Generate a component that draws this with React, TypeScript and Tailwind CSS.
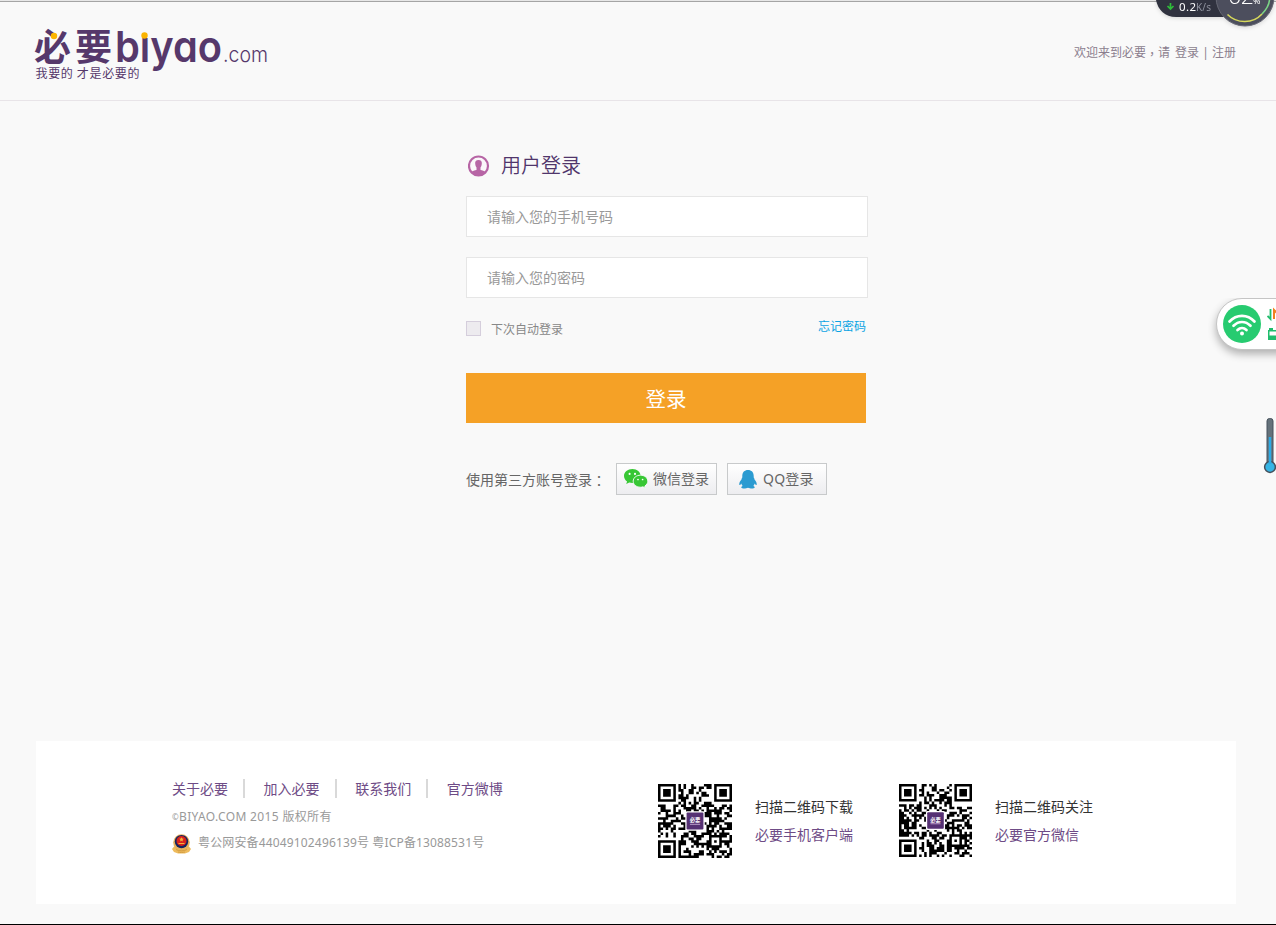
import React from "react";

const links = ["关于必要", "加入必要", "联系我们", "官方微博"];

function Logo() {
  return (
    <svg width="240" height="60" viewBox="0 0 240 60" className="block overflow-visible" fill="#56386b">
      <g className="font-['Noto_Sans_CJK_SC',sans-serif] font-bold">
        <text x="-2" y="36.500" fontSize="37" textLength="37" lengthAdjust="spacingAndGlyphs">必</text>
        <text x="39" y="36.500" fontSize="37" textLength="37" lengthAdjust="spacingAndGlyphs">要</text>
      </g>
      <text x="79" y="38" fontSize="43" textLength="107" lengthAdjust="spacingAndGlyphs" className="font-['Inter',sans-serif] font-semibold [font-feature-settings:'cv11']">bıyao</text>
      <text x="187" y="38" fontSize="22" textLength="45" lengthAdjust="spacingAndGlyphs" className="font-['Inter',sans-serif] font-light">.com</text>
      <text x="-.5" y="53.500" fontSize="12" textLength="104" className="font-['Noto_Sans_CJK_SC',sans-serif]">我要的 才是必要的</text>
      <circle cx="18" cy="12" r="3.2" fill="#fbb400" />
      <circle cx="108.500" cy="11.500" r="3.200" fill="#fbb400" />
    </svg>
  );
}

function QrCode({ seed, size }: { seed: number; size: number }) {
  const n = 29;
  let s = seed;
  const next = () => {
    s = (s * 1103515245 + 12345) % 2147483648;
    return s / 2147483648;
  };
  const finder = (x: number, y: number) => {
    if (x < 0 || y < 0 || x > 6 || y > 6) return false;
    const d = Math.max(Math.abs(x - 3), Math.abs(y - 3));
    return d !== 2;
  };
  let d = "";
  for (let y = 0; y < n; y++) {
    for (let x = 0; x < n; x++) {
      const random = next() > 0.47;
      let on = random;
      if (x < 8 && y < 8) on = finder(x, y);
      else if (x > 20 && y < 8) on = finder(x - 22, y);
      else if (x < 8 && y > 20) on = finder(x, y - 22);
      else if (x > 19 && x < 25 && y > 19 && y < 25) on = Math.max(Math.abs(x - 22), Math.abs(y - 22)) !== 1;
      if (on) d += `M${x} ${y}h1v1h-1z`;
    }
  }
  return (
    <svg width={size} height={size} viewBox="0 0 29 29" className="block shrink-0">
      <path d={d} fill="#000" />
      <rect x="10.7" y="10.7" width="7.6" height="7.6" rx=".6" fill="#fff" />
      <rect x="11.2" y="11.2" width="6.6" height="6.6" rx=".4" fill="#553073" />
      <text x="14.5" y="14.9" fontSize="2.1" textAnchor="middle" fill="#fff" className="font-['Noto_Sans_CJK_SC',sans-serif] font-bold">必要</text>
      <path d="M12.5 15.8h4" stroke="#b99cc8" strokeWidth=".4" />
    </svg>
  );
}

function UserIcon() {
  return (
    <svg width="22" height="22" viewBox="0 0 22 22" className="block shrink-0">
      <circle cx="10.500" cy="11" r="9.500" fill="#fbf7fa" stroke="#b765a5" strokeWidth="2.200" />
      <path d="M10.500 5c2.500 0 3.600 1.500 3.300 3.800-.2 1.800-.6 2.900-1.300 3.600V15c1.800.4 3.800.900 5.200 1.800A9.500 9.500 0 0 1 10.500 20.500a9.500 9.500 0 0 1-7.200-3.700C4.700 15.900 6.700 15.400 8.500 15v-2.600c-.7-.7-1.100-1.800-1.300-3.600C6.900 6.500 8 5 10.500 5Z" fill="#b765a5" />
    </svg>
  );
}

function WechatIcon() {
  return (
    <svg width="24" height="20" viewBox="0 0 24 20" className="block">
      <path d="M8.4 0C3.7 0 0 3 0 7c0 2.2 1.2 4.2 3.1 5.5L2.2 15l3.1-1.5c1 .3 2 .4 3.1.4 4.6 0 8.2-3 8.2-6.9S13 0 8.400 0Z" fill="#38c735" />
      <path d="M16.500 6.200c-4.200 0-7.300 2.600-7.300 6s3.100 6 7.300 6c.8 0 1.700-.1 2.500-.4l2.500 1.500-.7-2.300c1.900-1.100 3-2.900 3-4.800 0-3.400-3.300-6-7.300-6Z" fill="#38c735" stroke="#fbfbfc" strokeWidth=".9" />
      <g fill="#fff"><circle cx="5.600" cy="4.900" r="1.050" /><circle cx="11" cy="4.900" r="1.050" /><circle cx="14" cy="10.500" r=".85" /><circle cx="18.600" cy="10.500" r=".85" /></g>
    </svg>
  );
}

function QqIcon() {
  return (
    <svg width="18" height="19" viewBox="0 0 18 19" className="block">
      <path d="M9 0C5.500 0 3.300 2.300 3.300 6v1.500c-.5.5-.7 1.100-.7 1.700C1 11 0 13 .3 14.700c.2.700 1 .3 2-1.200.2 1 .7 1.800 1.400 2.500-1 .4-1.700 1-1.300 1.800.6 1 4.700.9 6.600-.1 1.900 1 6 1.100 6.600.1.400-.8-.3-1.400-1.300-1.800.7-.7 1.200-1.500 1.400-2.500 1 1.500 1.800 1.900 2 1.200.3-1.700-.7-3.700-2.300-5.500 0-.6-.2-1.200-.7-1.700V6C14.700 2.300 12.500 0 9 0Z" fill="#2b9bd1" />
    </svg>
  );
}

function PoliceBadge() {
  return (
    <svg width="19" height="20" viewBox="0 0 19 20" className="relative top-px block shrink-0">
      <path d="M2 12.500 0 15l2 3 4 1.500h7l4-1.500 2-3-2-2.500Z" fill="#eebb5c" />
      <circle cx="9.500" cy="8.500" r="8.300" fill="#e6b25c" />
      <circle cx="9.500" cy="7.600" r="6.700" fill="#16245e" />
      <circle cx="9.500" cy="7" r="5" fill="#d9221c" />
      <path d="m9.500 3.200.7 1.400 1.500.2-1.100 1.100.3 1.600-1.400-.8-1.400.8.300-1.600-1.100-1.100 1.500-.2ZM6.500 9h6v1h-6Z" fill="#f2b43b" />
      <path d="M4 15.500c3 1.800 8 1.800 11 0M6 18c2 .6 5 .6 7 0" fill="none" stroke="#d09a3e" strokeWidth=".9" />
    </svg>
  );
}

function SpeedMeter() {
  return (
    <div className="absolute right-0 top-0 h-9 w-[122px] overflow-hidden">
      <svg width="122" height="36" viewBox="0 0 122 36" className="block drop-shadow-sm">
        <path d="M2 0c2 10 9 17 20 17h60V0Z" fill="#30323f" />
        <path d="M16.500 3v5.500M13.500 6l3 3 3-3" stroke="#2fbd3a" strokeWidth="1.700" fill="none" />
        <text x="25" y="11" fontSize="11.500" fill="#fff" textLength="17" className="font-['Noto_Sans',sans-serif]">0.2</text>
        <text x="42" y="11" fontSize="10" fill="#8f929e" textLength="15" className="font-['Noto_Sans',sans-serif]">K/s</text>
        <circle cx="91" cy="-3" r="29" fill="#4c4e5d" stroke="#656773" />
        <path d="M73.500 14.500C83 24 99 24 108 14" stroke="#d6d85b" strokeWidth="1.600" fill="none" />
        <path d="M108 14c5-5 7-9 7.500-14" stroke="#7bd486" strokeWidth="1.600" fill="none" />
        <text x="74" y="4" fontSize="23" fill="#fff" textLength="26" className="font-['Open_Sans',sans-serif] font-light">62</text>
        <text x="99" y="4" fontSize="9" fill="#fff" className="font-['Noto_Sans',sans-serif]">%</text>
      </svg>
    </div>
  );
}

function WifiWidget() {
  return (
    <div className="absolute right-0 top-[298px] h-[66px] w-[68px] overflow-hidden pl-2">
      <div className="flex h-[52px] w-[90px] items-center gap-[6px] rounded-l-full border border-[#c5c5c5] bg-white pl-[6px] shadow-[0_4px_8px_rgba(0,0,0,0.3)]">
        <svg width="38" height="38" viewBox="0 0 38 38" className="shrink-0">
          <circle cx="19" cy="19" r="19" fill="#27cb70" />
          <g fill="none" stroke="#fff" strokeWidth="2.700" strokeLinecap="round">
            <path d="M6.500 16.500c7-7.500 18-7.500 25 0M10.500 20.800c5-5.100 12-5.100 17 0M14.500 25c2.700-2.500 6.300-2.500 9 0" />
          </g>
          <circle cx="19" cy="28.500" r="2" fill="#fff" />
        </svg>
        <svg width="20" height="38" viewBox="0 0 20 38" className="shrink-0">
          <path d="M3.500 4v10L.5 11" fill="none" stroke="#20bd6c" strokeWidth="1.800" />
          <path d="M7 14V5l4 4" fill="none" stroke="#f28022" strokeWidth="2" />
          <path d="M1 25h12v10H1Z" fill="#20bd6c" /><path d="M2.500 26.500h8v4h-8Z" fill="#fff" /><path d="M2 23h4v2H2Z" fill="#20bd6c" />
        </svg>
      </div>
    </div>
  );
}

function Thermometer() {
  return (
    <svg width="13" height="58" viewBox="0 0 13 58" className="absolute right-0 top-[417px]">
      <rect x="4" y="1.500" width="6" height="47" rx="2.500" fill="#65727b" stroke="#46515c" />
      <circle cx="7" cy="50" r="5.400" fill="#36b5e5" stroke="#46515c" strokeWidth="1.500" />
      <path d="M7 20v27" stroke="#2cabe5" strokeWidth="2.500" />
    </svg>
  );
}

function ScanBlock({ seed, size, title, target }: { seed: number; size: number; title: string; target: string }) {
  return (
    <div className="flex items-start gap-[23px] text-sm leading-7">
      <QrCode seed={seed} size={size} />
      <div className="whitespace-nowrap pt-[9px]">
        <p className="text-[#333]">{title}</p>
        <p className="text-[#6e4b86]">{target}</p>
      </div>
    </div>
  );
}

export default function App() {
  return (
    <div className="relative flex h-[925px] w-[1276px] flex-col overflow-hidden border-b border-black bg-[#f9f9f9] font-['Noto_Sans','Noto_Sans_CJK_SC',sans-serif]">
      <div className="h-[2px] shrink-0 border-b border-[#a5a5a5] bg-[#e8e8e8]" />
      <header className="flex h-[99px] shrink-0 items-start justify-between border-b border-[#e8e4e8] pl-9 pr-10">
        <div className="pt-[22px]"><Logo /></div>
        <p className="flex whitespace-pre pt-[41px] text-xs leading-5 text-[#8b7e8e]">
          <span className="w-[101px]">欢迎来到必要<span lang="zh-TW" className="relative top-[2px] font-['Noto_Sans_CJK_TC',sans-serif] leading-none">，</span>请</span>
          <a href="#">登录</a><span className="w-[13px] text-center">|</span><a href="#">注册</a>
        </p>
      </header>

      <main className="ml-[466px] h-[640px] w-[402px] shrink-0">
        <h1 className="flex h-[95px] items-end gap-[11px] pb-[19px] pl-[2px] text-xl font-[350] leading-[22px] text-[#50356b]">
          <UserIcon /><span className="pb-px font-['Noto_Sans_CJK_SC',sans-serif]">用户登录</span>
        </h1>
        <input className="block h-[41px] w-full border border-[#e6e6e6] bg-white px-5 text-sm text-[#999] placeholder:text-[#999] outline-none" placeholder="请输入您的手机号码" />
        <input className="mt-5 block h-[41px] w-full border border-[#e6e6e6] bg-white px-5 text-sm placeholder:text-[#999] outline-none" placeholder="请输入您的密码" />
        <div className="flex h-[75px] items-start justify-between pr-[2px] pt-[19px] text-xs leading-5">
          <label className="flex pt-[3px] text-[#888]">
            <span className="mr-[10px] mt-px h-[15px] w-[15px] border border-[#d5cedc] bg-[#edebef]" />下次自动登录
          </label>
          <a href="#" className="text-[#0ba3e3]">忘记密码</a>
        </div>
        <button className="flex h-[50px] w-[400px] items-center justify-center bg-[#f5a126] pt-[3px] text-[20.500px] leading-none text-white">登录</button>
        <div className="mt-10 flex h-8 items-center text-sm text-[#666]">
          <span className="w-[150px] whitespace-nowrap pt-px">使用第三方账号登录<span lang="zh-TW" className="relative top-px font-['Noto_Sans_CJK_TC',sans-serif] leading-none">：</span></span>
          <button className="flex h-8 w-[101px] items-center gap-[5px] whitespace-nowrap border border-[#c8cacb] bg-linear-to-b from-white to-[#ededf0] pl-[7px]"><WechatIcon />微信登录</button>
          <button className="ml-[10px] flex h-8 w-[100px] items-center gap-[5px] whitespace-nowrap border border-[#c8cacb] bg-linear-to-b from-white to-[#ededf0] pl-[11px]"><QqIcon /><span className="pl-px tracking-[0.200px]">QQ登录</span></button>
        </div>
      </main>

      <footer className="ml-9 flex h-[163px] w-[1200px] shrink-0 items-start bg-white pl-[136px]">
        <div className="w-[486px] pt-[38px] text-xs text-[#999]">
          <nav className="flex h-5 items-center text-sm">
            {links.map((label, i) => (
              <React.Fragment key={label}>
                {i > 0 && <span className="-mt-0.5 ml-[15px] mr-[18.600px] h-[19px] w-[2px] bg-[#d9d9d9]" />}
                <a href="#" className="text-[#6e4b86]">{label}</a>
              </React.Fragment>
            ))}
          </nav>
          <p className="mt-2 flex h-5 items-center"><span className="w-[7px] text-[8px]">©</span><span className="tracking-[0.350px]">BIYAO.COM 2015 版权所有</span></p>
          <p className="mt-[6px] flex h-5 items-center gap-[7px] whitespace-nowrap"><PoliceBadge /><span className="tracking-[0.150px]">粤公网安备44049102496139号 粤ICP备13088531号</span></p>
        </div>
        <div className="flex gap-[46px] pt-[43px]">
          <ScanBlock seed={2015} size={74} title="扫描二维码下载" target="必要手机客户端" />
          <ScanBlock seed={88531} size={73} title="扫描二维码关注" target="必要官方微信" />
        </div>
      </footer>

      <SpeedMeter />
      <WifiWidget />
      <Thermometer />
    </div>
  );
}
